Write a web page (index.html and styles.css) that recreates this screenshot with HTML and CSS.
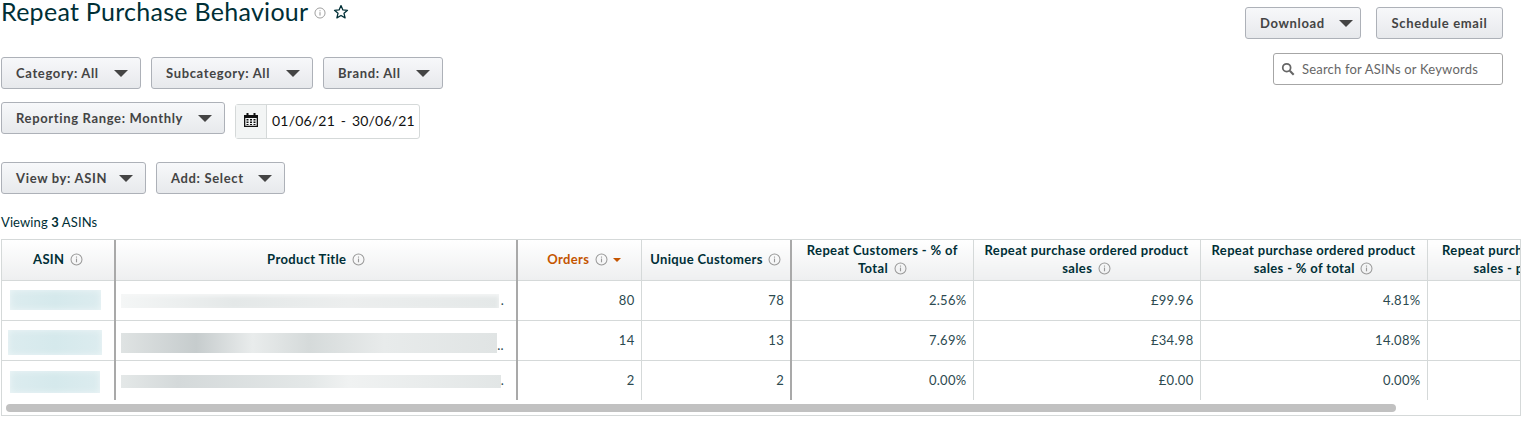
FILE: index.html
```html
<!DOCTYPE html>
<html lang="en">
<head>
  <meta charset="UTF-8" />
  <title>Repeat Purchase Behaviour</title>
  <link rel="stylesheet" href="styles.css">
</head>
<body>
  <svg class="sprites" width="0" height="0">
    <symbol id="info" viewBox="0 0 14 14">
      <circle cx="7" cy="7" r="5.9" fill="none" stroke="currentColor" stroke-width="1.1"/>
      <rect x="6.4" y="6" width="1.2" height="4" fill="currentColor"/>
      <rect x="6.4" y="3.8" width="1.2" height="1.2" fill="currentColor"/>
    </symbol>
  </svg>

  <div class="top">
    <div class="filters">
      <div class="title-row">
        <h1>Repeat Purchase Behaviour</h1>
        <svg class="title-info"><use href="#info"/></svg>
        <svg class="star" viewBox="0 0 16 16"><path d="M8 1.6l1.9 4.3 4.6.4-3.5 3 1.1 4.6L8 11.5l-4.1 2.4L5 9.3l-3.5-3 4.6-.4z" fill="none" stroke="#002f36" stroke-width="1.3" stroke-linejoin="round"/></svg>
      </div>
      <div class="filter-row first">
        <button class="btn wide-a">Category: All<i class="caret"></i></button>
        <button class="btn wide-b">Subcategory: All<i class="caret"></i></button>
        <button class="btn wide-c">Brand: All<i class="caret"></i></button>
      </div>
      <div class="filter-row second">
        <button class="btn wide-d">Reporting Range: Monthly<i class="caret"></i></button>
        <div class="dates">
          <span class="cal">
            <svg viewBox="0 0 16 16" width="16" height="16"><path d="M1 3h2.500V1h2v2h5V1h2v2H15v12H1zM2.300 6v7.700h11.400V6zM3.500 7h2v1.600h-2zM7 7h2v1.600H7zM10.500 7h2v1.600h-2zM3.500 9.500h2v1.500h-2zM7 9.500h2v1.500H7zM10.500 9.500h2v1.500h-2zM3.500 12h2v1h-2zM7 12h2v1H7zM10.500 12h2v1h-2z" fill="#111" fill-rule="evenodd"/></svg>
          </span>
          <span class="range">01/06/21 - 30/06/21</span>
        </div>
      </div>
      <div class="filter-row third">
        <button class="btn wide-e">View by: ASIN<i class="caret"></i></button>
        <button class="btn wide-f">Add: Select<i class="caret"></i></button>
      </div>
    </div>
    <div class="actions">
      <div class="action-row">
        <button class="btn wide-g">Download<i class="caret"></i></button>
        <button class="btn wide-h">Schedule email</button>
      </div>
      <div class="search">
        <svg viewBox="0 0 16 16" width="14" height="14"><circle cx="6.500" cy="6.500" r="4.500" fill="none" stroke="#666" stroke-width="2"/><path d="M10 10l4.500 4.500" stroke="#666" stroke-width="2.400"/></svg>
        <span>Search for ASINs or Keywords</span>
      </div>
    </div>
  </div>

  <p class="viewing">Viewing <b>3</b> ASINs</p>

  <div class="table-box">
    <div class="table-clip">
      <table>
        <colgroup>
          <col class="c-asin"><col class="c-title"><col class="c-orders"><col class="c-unique">
          <col class="c-repeat"><col class="c-sales"><col class="c-share"><col class="c-last">
        </colgroup>
        <thead>
          <tr>
            <th class="thick">ASIN <svg class="info"><use href="#info"/></svg></th>
            <th class="thick">Product Title <svg class="info"><use href="#info"/></svg></th>
            <th class="sorted">Orders <svg class="info"><use href="#info"/></svg> <i class="sort"></i></th>
            <th class="thick">Unique Customers <svg class="info"><use href="#info"/></svg></th>
            <th>Repeat Customers - % of<br>Total <svg class="info"><use href="#info"/></svg></th>
            <th>Repeat purchase ordered product<br>sales <svg class="info"><use href="#info"/></svg></th>
            <th>Repeat purchase ordered product<br>sales - % of total <svg class="info"><use href="#info"/></svg></th>
            <th>Repeat purchase ordered product<br>sales - per customer <svg class="info"><use href="#info"/></svg></th>
          </tr>
        </thead>
        <tbody>
          <tr>
            <td class="thick hidden-cell"><div class="asin-a"></div></td>
            <td class="thick hidden-cell"><div class="title-cell"><div class="title-a"></div><span>.</span></div></td>
            <td>80</td><td class="thick">78</td><td>2.56%</td><td>£99.96</td><td>4.81%</td><td></td>
          </tr>
          <tr>
            <td class="thick hidden-cell"><div class="asin-b"></div></td>
            <td class="thick hidden-cell"><div class="title-cell"><div class="title-b"></div><span>..</span></div></td>
            <td>14</td><td class="thick">13</td><td>7.69%</td><td>£34.98</td><td>14.08%</td><td></td>
          </tr>
          <tr>
            <td class="thick hidden-cell"><div class="asin-c"></div></td>
            <td class="thick hidden-cell"><div class="title-cell"><div class="title-c"></div><span>.</span></div></td>
            <td>2</td><td class="thick">2</td><td>0.00%</td><td>£0.00</td><td>0.00%</td><td></td>
          </tr>
        </tbody>
      </table>
    </div>
    <div class="scroll-track"><div class="scroll-thumb"></div></div>
  </div>
</body>
</html>
```

FILE: styles.css
```css
* {
  box-sizing: border-box;
}
body {
  margin: 0;
  padding: 0 2px 0 1px;
  background: #fff;
  color: #002f36;
  font-family: 'Lato', 'Noto Sans', sans-serif;
  font-size: 13px;
  overflow: hidden;
}
.sprites {
  position: absolute;
}
.top {
  display: flex;
  justify-content: space-between;
  height: 215px;
}
.title-row {
  display: flex;
  align-items: center;
  height: 23px;
}
h1 {
  margin: 0;
  font-size: 25px;
  font-weight: 400;
  line-height: 23px;
  letter-spacing: 0.28px;
  color: #002f36;
  white-space: nowrap;
}
.title-info {
  width: 12px;
  height: 12px;
  margin: 3px 0 0 6px;
  color: #999;
}
.star {
  width: 16px;
  height: 16px;
  margin-left: 7px;
}
.filter-row {
  display: flex;
  gap: 10px;
}
.filter-row.first {
  margin-top: 34px;
}
.filter-row.second {
  margin-top: 13px;
  height: 37px;
}
.filter-row.third {
  margin-top: 23px;
}
.btn {
  display: flex;
  align-items: center;
  justify-content: space-between;
  height: 32px;
  padding: 0 12px 0 14px;
  border: 1px solid #adb1b8;
  border-radius: 3px;
  background: linear-gradient(to bottom, #f7f8fa, #e7e9ec);
  color: #444;
  font-family: inherit;
  font-size: 13px;
  font-weight: 700;
  letter-spacing: 0.65px;
  white-space: nowrap;
}
.caret {
  width: 0;
  height: 0;
  border-left: 7px solid transparent;
  border-right: 7px solid transparent;
  border-top: 7px solid #444;
}
.wide-a { width: 140px; }
.wide-b { width: 162px; }
.wide-c { width: 120px; }
.wide-d { width: 224px; }
.wide-e { width: 145px; }
.wide-f { width: 129px; }
.wide-g { width: 116px; padding-right: 7px; }
.wide-h { width: 127px; justify-content: center; padding: 0; }
.dates {
  display: flex;
  width: 185px;
  height: 35px;
  margin-top: 2px;
  border: 1px solid #d5d9d9;
  border-radius: 3px;
}
.cal {
  display: flex;
  align-items: center;
  justify-content: center;
  width: 31px;
  padding-bottom: 4px;
  background: #f3f5f5;
  border-right: 1px solid #d5d9d9;
}
.range {
  padding-left: 5px;
  font-size: 14px;
  line-height: 32px;
  color: #111;
  letter-spacing: 0.2px;
  word-spacing: 2px;
  white-space: nowrap;
}
.actions {
  display: flex;
  flex-direction: column;
  align-items: flex-end;
  width: 258px;
  margin-right: 18px;
  padding-top: 7px;
}
.action-row {
  display: flex;
  gap: 15px;
}
.search {
  display: flex;
  align-items: center;
  gap: 7px;
  width: 230px;
  height: 32px;
  margin-top: 14px;
  padding-left: 7px;
  border: 1px solid #a6a6a6;
  border-radius: 3px;
  color: #666;
  font-size: 13px;
  letter-spacing: 0.2px;
}
.viewing {
  margin: 0;
  font-size: 13px;
  line-height: 15px;
  height: 24px;
  letter-spacing: 0.1px;
}
.table-box {
  border: 1px solid #d5d9d9;
  width: 1520px;
  height: 177px;
}
.table-clip {
  overflow: hidden;
  height: 161px;
}
table {
  border-collapse: collapse;
  table-layout: fixed;
  width: 1659px;
}
.c-asin { width: 113px; }
.c-title { width: 402px; }
.c-orders { width: 124px; }
.c-unique { width: 150px; }
.c-repeat { width: 182px; }
.c-sales { width: 227px; }
.c-share { width: 227px; }
.c-last { width: 234px; }
th {
  height: 40px;
  padding: 0 6px 2px;
  background: linear-gradient(to bottom, #fff, #eeeff0);
  border-right: 1px solid #d5d9d9;
  border-bottom: 1px solid #d5d9d9;
  font-size: 13px;
  font-weight: 700;
  line-height: 18px;
  letter-spacing: 0.35px;
  color: #002f36;
  white-space: nowrap;
}
th.sorted {
  padding-left: 16px;
  color: #c45500;
}
td {
  height: 40px;
  padding: 0 6px;
  border-right: 1px solid #d5d9d9;
  border-bottom: 1px solid #d5d9d9;
  text-align: right;
  font-size: 13px;
  letter-spacing: 0.3px;
  color: #2c4a50;
}
tbody tr:last-child td {
  border-bottom: 0;
}
td.thick, th.thick {
  border-right: 2px solid #a9a9a9;
}
.hidden-cell {
  padding: 0;
}
.info {
  width: 13px;
  height: 13px;
  vertical-align: -2px;
  margin-left: 2px;
  color: #999;
}
.sort {
  display: inline-block;
  width: 0;
  height: 0;
  margin-left: 2px;
  vertical-align: 2px;
  border-left: 4px solid transparent;
  border-right: 4px solid transparent;
  border-top: 4px solid #c45500;
}
.asin-a, .asin-b, .asin-c {
  height: 20px;
  width: 91px;
  margin-left: 8px;
  background: linear-gradient(to right, #dcecef, #d5e9ec 50%, #dcecef);
  box-shadow: inset 0 0 6px #eef6f7;
}
.asin-b {
  height: 25px;
  width: 94px;
  margin: 5px 0 0 6px;
}
.asin-c {
  height: 22px;
  width: 90px;
  margin-top: 4px;
}
.title-cell {
  display: flex;
  align-items: flex-end;
  justify-content: space-between;
  padding: 0 12px 0 5px;
  font-size: 13px;
  line-height: 16px;
}
.title-a, .title-b, .title-c {
  height: 14px;
  width: 378px;
  background: linear-gradient(to right, #f4f6f6, #e4e8e8 30%, #eceeee 60%, #e4e8e8);
  box-shadow: inset 0 2px 4px #f6f7f7;
}
.title-b {
  height: 20px;
  width: 376px;
  margin-top: 6px;
  background: linear-gradient(to right, #dfe3e3, #c6cccd 20%, #e9ecec 35%, #d5dada 50%, #e8ebeb 70%, #e0e4e4);
  box-shadow: none;
}
.title-c {
  height: 13px;
  width: 380px;
  background: linear-gradient(to right, #e4e8e8, #d4d9da 15%, #e4e8e8 50%, #f0f2f2 60%, #e2e6e6);
  box-shadow: none;
}
.scroll-track {
  padding: 3px 4px;
}
.scroll-thumb {
  width: 1390px;
  height: 8px;
  border-radius: 4px;
  background: #c1c1c1;
}
```
